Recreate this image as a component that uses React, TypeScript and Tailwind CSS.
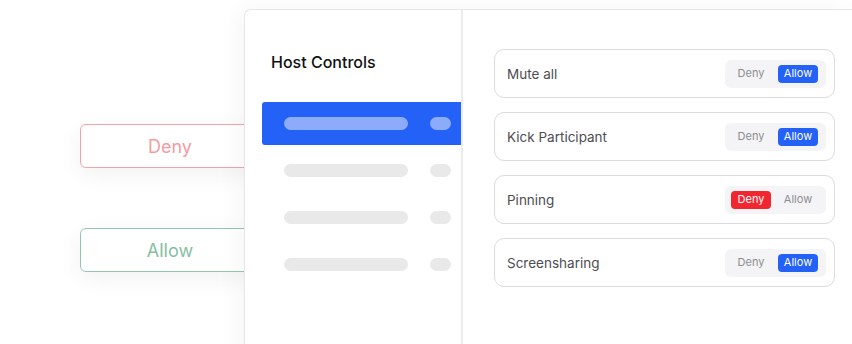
import React from "react";

type Perm = "deny" | "allow";

const rows: { label: string; value: Perm }[] = [
  { label: "Mute all", value: "allow" },
  { label: "Kick Participant", value: "allow" },
  { label: "Pinning", value: "deny" },
  { label: "Screensharing", value: "allow" },
];

function Toggle({ value }: { value: Perm }) {
  return (
    <div className="flex h-[28px] w-[101px] items-center gap-[7px] rounded-md bg-[#f4f4f6] px-[6px]">
      <span
        className={
          value === "deny"
            ? "flex h-[18px] w-[40px] items-center justify-center rounded-[4px] bg-[#f2262f] text-[11px] text-white"
            : "flex h-[18px] w-[40px] items-center justify-center text-[11px] text-[#8d8d92]"
        }
      >
        Deny
      </span>
      <span
        className={
          value === "allow"
            ? "flex h-[18px] w-[40px] items-center justify-center rounded-[4px] bg-[#2361f7] text-[11px] text-white"
            : "flex h-[18px] w-[40px] items-center justify-center text-[11px] text-[#8d8d92]"
        }
      >
        Allow
      </span>
    </div>
  );
}

function SkeletonRow({ active }: { active?: boolean }) {
  return (
    <div
      className={
        active
          ? "flex h-[43px] items-center gap-[22px] rounded-l-[3px] bg-[#2361f7] pl-[22px]"
          : "flex h-[43px] items-center gap-[22px] pl-[22px]"
      }
    >
      <div
        className={
          active
            ? "h-[13px] w-[124px] rounded-full bg-[#8dabfb]"
            : "h-[13px] w-[124px] rounded-full bg-[#e9e9ea]"
        }
      />
      <div
        className={
          active
            ? "h-[13px] w-[21px] rounded-full bg-[#8dabfb]"
            : "h-[13px] w-[21px] rounded-full bg-[#e9e9ea]"
        }
      />
    </div>
  );
}

export default function App() {
  return (
    <div
      className="flex h-[344px] w-[852px] overflow-hidden bg-white"
      style={{ fontFamily: "Inter, 'Noto Sans', sans-serif" }}
    >
      <div className="ml-[80px] mt-[124px] flex w-[180px] shrink-0 flex-col gap-[60px]">
        <div className="flex h-[44px] items-center justify-center rounded-[6px] border border-[#f3a2aa] bg-white text-[18px] text-[#f29ca5] shadow-[0_6px_24px_rgba(0,0,0,0.06)]">
          Deny
        </div>
        <div className="flex h-[44px] items-center justify-center rounded-[6px] border border-[#92c7ae] bg-white text-[18px] text-[#86bea3] shadow-[0_6px_24px_rgba(0,0,0,0.06)]">
          Allow
        </div>
      </div>

      <div className="relative z-10 -ml-[16px] mt-[9px] flex h-[400px] flex-1 rounded-tl-[7px] border-l border-t border-[#e6e6e8] bg-white shadow-[-6px_0_24px_rgba(0,0,0,0.04)]">
        <div className="w-[218px] shrink-0 border-r-2 border-[#ececee] pl-[17px]">
          <h2 className="ml-[9px] mt-[40px] text-[16px] font-medium text-[#111]">Host Controls</h2>
          <div className="mt-[28px] flex flex-col gap-[4px]">
            <SkeletonRow active />
            <SkeletonRow />
            <SkeletonRow />
            <SkeletonRow />
          </div>
        </div>

        <div className="flex flex-col gap-[14px] pl-[31px] pt-[39px]">
          {rows.map((r) => (
            <div
              key={r.label}
              className="flex h-[49px] w-[341px] items-center justify-between rounded-[10px] border border-[#dcdcdf] pl-[12px] pr-[8px]"
            >
              <span className="mt-[2px] text-[13.5px] text-[#4d4d52]">{r.label}</span>
              <Toggle value={r.value} />
            </div>
          ))}
        </div>
      </div>
    </div>
  );
}
